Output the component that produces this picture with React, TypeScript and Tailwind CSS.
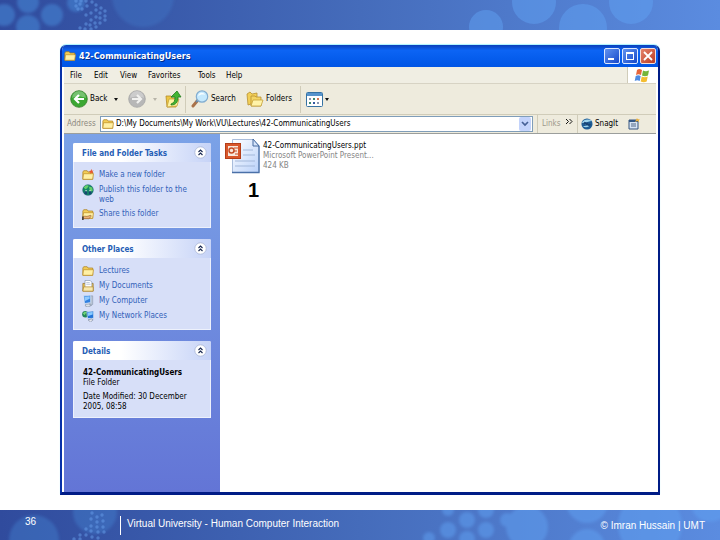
import type { ReactNode } from 'react';

type Kind = 'folder' | 'new' | 'globe' | 'share' | 'docs' | 'computer' | 'network';

const uiFont = "font-['DejaVu_Sans_Condensed','DejaVu_Sans',sans-serif] [font-stretch:condensed]";

const menus = [
    { name: 'File', width: 'w-6' },
    { name: 'Edit', width: 'w-[26px]' },
    { name: 'View', width: 'w-7' },
    { name: 'Favorites', width: 'w-[50px]' },
    { name: 'Tools', width: 'w-7' },
    { name: 'Help', width: 'w-6' },
];

const tasks: { name: string; icon: Kind }[] = [
    { name: 'Make a new folder', icon: 'new' },
    { name: 'Publish this folder to the web', icon: 'globe' },
    { name: 'Share this folder', icon: 'share' },
];

const places: { name: string; icon: Kind }[] = [
    { name: 'Lectures', icon: 'folder' },
    { name: 'My Documents', icon: 'docs' },
    { name: 'My Computer', icon: 'computer' },
    { name: 'My Network Places', icon: 'network' },
];

function FolderShape() {
    return (
        <>
            <path d="M1 3.5 2 2h4l1 1.5h5.5V12H1z" fill="#f3cd58" stroke="#a87b18" strokeWidth=".8" />
            <path d="M1 12 1.8 5.5h11.6L12.4 12z" fill="#fff0a5" stroke="#bd8d25" strokeWidth=".8" />
        </>
    );
}

function SmallIcon({ kind }: { kind: Kind }) {
    return (
        <svg viewBox="0 0 14 14" className="size-3 shrink-0" aria-hidden="true">
            {kind === 'folder' && <FolderShape />}
            {kind === 'new' && (
                <>
                    <FolderShape />
                    <path d="m11 0 .7 2 2-.3-1.5 1.6 1 1.7-2-.5L10 6l-.2-2-2-.8 2-.8z" fill="#e8552d" />
                </>
            )}
            {kind === 'globe' && (
                <>
                    <circle cx="7" cy="7" r="6.2" fill="#168767" stroke="#0c5668" strokeWidth=".6" />
                    <path d="M2 4c2-3 5-3 6-2L6 5 4 6zM8 3l4 1 .5 4-3 1z" fill="#66d06b" />
                    <path d="M3 10c0-3 3-3 3 0v2H3zM8 10c0-3 3-3 3 0v2H8z" fill="#14486f" />
                    <path d="M4 7h1.5v1.5H4zM8.6 7h1.5v1.5H8.6z" fill="#c8ecd5" />
                </>
            )}
            {kind === 'share' && (
                <>
                    <FolderShape />
                    <path d="M1 10.500c3-2 4 0 6-1l3-1 1 1-3 3H1z" fill="#efb178" stroke="#71430f" strokeWidth=".6" />
                    <path d="M0 10h2v4H0z" fill="#4a423b" />
                </>
            )}
            {kind === 'docs' && (
                <>
                    <path d="M1 4h12v9H1z" fill="#f0c650" stroke="#936d23" strokeWidth=".8" />
                    <path d="M3.500.5h6l2 2V9h-8z" fill="#fff" stroke="#7587a2" strokeWidth=".7" />
                    <path d="M5 3h4M5 5h5" stroke="#91a4c3" strokeWidth=".7" />
                    <path d="M1 13 2 8h11v5z" fill="#f8e8af" stroke="#a87b18" strokeWidth=".7" />
                </>
            )}
            {kind === 'computer' && (
                <>
                    <path d="M9 1h3.500v10L9 13z" fill="#b9c5d6" stroke="#71809b" strokeWidth=".5" />
                    <path d="m2 1 8-.7v8.500L3 10z" fill="#2f7fe0" stroke="#e4edf7" strokeWidth=".7" />
                    <path d="m3 2 6-.6v3L3.400 7z" fill="#8fcaff" />
                    <path d="m4 11 4-.5 3 1.500-4 2-3-1z" fill="#dae1e9" stroke="#6d7b92" strokeWidth=".6" />
                </>
            )}
            {kind === 'network' && (
                <>
                    <circle cx="4" cy="5" r="3.800" fill="#218457" />
                    <path d="M1 4c2-3 4-2 4-1L3 6z" fill="#70d575" />
                    <path d="m5.500 2 8-.8v8.500L6.500 10z" fill="#2474d8" stroke="#dde8f3" strokeWidth=".7" />
                    <path d="m6.500 3 6-.7v3L7 7z" fill="#8acbff" />
                    <path d="m7 11.500 4-1 2 1-3 2.500z" fill="#e7e9ef" stroke="#62718a" strokeWidth=".6" />
                </>
            )}
        </svg>
    );
}

function Arrow({ pale = false }: { pale?: boolean }) {
    return (
        <svg viewBox="0 0 4 3" className="h-[3px] w-1 shrink-0" aria-hidden="true">
            <path d="M0 0h4L2 3z" fill={pale ? '#b7b4a8' : '#111'} />
        </svg>
    );
}

function RoundArrow({ forward = false }: { forward?: boolean }) {
    return (
        <svg viewBox="0 0 18 18" className="size-[18px] shrink-0" aria-hidden="true">
            <circle cx="9" cy="9" r="8.300" fill={forward ? '#b7b7b7' : '#3ba732'} stroke={forward ? '#a4a4a4' : '#347d2b'} strokeWidth=".8" />
            <path d="M2 8a7 7 0 0 1 14 0C11 6 7 6 2 8z" fill="#fff" opacity=".3" />
            <path
                d={forward ? 'M4 9h9M9 5l4 4-4 4' : 'M14 9H5M9 5 5 9l4 4'}
                stroke={forward ? '#f1f1ef' : '#fff'}
                strokeWidth="2.200"
                fill="none"
            />
        </svg>
    );
}

function Toolbar() {
    return (
        <div className="flex h-[31px] items-center border-b border-[#d0ccb9] bg-[#eeebdd] px-1.5 text-[8px]">
            <button className="flex w-[42px] items-center gap-0.5">
                <RoundArrow />
                Back
            </button>
            <button aria-label="Back history" className="flex w-4 items-center pl-0.5"><Arrow /></button>
            <button aria-label="Forward" className="flex w-[25px] items-center"><RoundArrow forward /></button>
            <button aria-label="Forward history" className="w-3"><Arrow pale /></button>
            <button aria-label="Up" className="w-5">
                <svg viewBox="0 0 17 18" className="h-[18px] w-[17px]" aria-hidden="true">
                    <path d="M1 6h5l1 2h5l-1 9H2z" fill="#edc742" stroke="#b48c28" strokeWidth=".8" />
                    <path d="m2 17 2-8h10l-2 7z" fill="#fff3a1" stroke="#c6a13a" strokeWidth=".8" />
                    <path d="M6 14c3-1 4-3 4-7H6l6-6 4 6h-3c0 5-2 8-7 8z" fill="#42b432" stroke="#217b1c" strokeWidth=".8" />
                </svg>
            </button>
            <span className="mr-[5px] h-[27px] w-px bg-[#d0ccb9]" />
            <button className="flex w-[55px] items-center gap-0.5">
                <svg viewBox="0 0 18 18" className="size-[18px] shrink-0" aria-hidden="true">
                    <path d="m2 16 5-6" stroke="#aa7249" strokeWidth="3" strokeLinecap="round" />
                    <path d="m5 12 2-2" stroke="#668aad" strokeWidth="2" />
                    <circle cx="11" cy="6.500" r="5.700" fill="#c5e9fd" stroke="#83add0" strokeWidth="1.200" />
                    <path d="M7 6c1-4 6-4 7-1-3-1-5 0-7 1z" fill="#f7fdff" />
                </svg>
                Search
            </button>
            <button className="flex w-[54px] items-center gap-0.5">
                <svg viewBox="0 0 18 18" className="size-[18px] shrink-0" aria-hidden="true">
                    <path d="M1 4 4 2l2 2 5-1v9l-9 3z" fill="#f2cf57" stroke="#b89134" strokeWidth=".8" />
                    <path d="M5 6h4l1 1h5v9H5z" fill="#f4d564" stroke="#b89134" strokeWidth=".8" />
                    <path d="m5 16 2-6h10l-2 6z" fill="#fff3a9" stroke="#c7a23b" strokeWidth=".8" />
                </svg>
                Folders
            </button>
            <span className="mr-[5px] h-[27px] w-px bg-[#d0ccb9]" />
            <button aria-label="Views" className="flex items-center gap-0.5">
                <svg viewBox="0 0 17 15" className="h-[15px] w-[17px]" aria-hidden="true">
                    <rect x=".5" y=".5" width="16" height="14" rx="1" fill="#fff" stroke="#3673a3" />
                    <path d="M1 1h15v3H1z" fill="#5794cc" />
                    <path d="M3 6h2v2H3zM11 10h2v2h-2z" fill="#8796b1" />
                    <path d="M7 6h2v2H7zM3 10h2v2H3z" fill="#3d8a71" />
                    <path d="M11 6h2v2h-2z" fill="#d37850" />
                    <path d="M7 10h2v2H7z" fill="#345aa0" />
                </svg>
                <Arrow />
            </button>
        </div>
    );
}

function AddressBar() {
    return (
        <div className="flex h-[19px] items-center border-b border-[#9b9e9c] bg-[#eeebdd] pl-[3px] text-[8px]">
            <label htmlFor="address" className="w-[33px] text-[#8c897e]">Address</label>
            <div className="flex h-4 min-w-0 flex-1 items-center border border-[#7f9db9] bg-white pr-px pl-px">
                <SmallIcon kind="folder" />
                <input
                    id="address"
                    className="ml-0.5 min-w-0 flex-1 bg-transparent outline-none"
                    defaultValue="D:\My Documents\My Work\VU\Lectures\42-CommunicatingUsers"
                />
                <button aria-label="Address list" className="flex h-3.5 w-3 items-center justify-center rounded-xs bg-[#c3d3fb]">
                    <svg viewBox="0 0 8 6" className="h-1.5 w-2" aria-hidden="true">
                        <path d="m1 1 3 3 3-3" fill="none" stroke="#456096" strokeWidth="1.700" />
                    </svg>
                </button>
            </div>
            <div className="ml-1 flex h-full w-10 items-center justify-between border-l border-[#d0ccb9] pr-1 pl-1">
                <span className="text-[#9d998b]">Links</span>
                <button aria-label="More links" className="pb-1.5">
                    <svg viewBox="0 0 7 5" className="h-[5px] w-[7px]" aria-hidden="true">
                        <path d="m0 0 2.500 2.500L0 5M3.500 0 6 2.500 3.500 5" fill="none" stroke="#111" />
                    </svg>
                </button>
            </div>
            <div className="flex h-full w-[79px] items-center border-l border-[#d0ccb9] pl-[3px]">
                <button className="flex w-[47px] items-center gap-0.5">
                    <svg viewBox="0 0 13 13" className="size-3 shrink-0" aria-hidden="true">
                        <circle cx="6.500" cy="6.500" r="6" fill="#1d5c94" />
                        <path d="M1 5C3 1 8 1 12 3L8 4 5 5l5 2c-1 3-5 4-8 2l5-1z" fill="#9fd5ee" />
                        <path d="m4 4 7 3-2 2-7-3z" fill="#174476" />
                    </svg>
                    SnagIt
                </button>
                <button aria-label="Capture">
                    <svg viewBox="0 0 12 12" className="size-3" aria-hidden="true">
                        <path d="M1 2h9v9H1z" fill="#d7e4f4" stroke="#36557f" />
                        <path d="M1 2h9v2H1z" fill="#325684" />
                        <path d="M3 6h5M3 8h5" stroke="#526887" />
                        <path d="m9 0 .7 1.300H12l-1.400 1.200.7 1.800L9.300 3 7 4l1-2z" fill="#f0b33c" />
                    </svg>
                </button>
            </div>
        </div>
    );
}

function Panel({ title, children }: { title: string; children: ReactNode }) {
    return (
        <section className="rounded-t-xs border border-t-0 border-[#edf1fc] bg-[#d7dff8]">
            <div className="-mx-px flex h-[19px] items-center justify-between rounded-t-xs bg-linear-to-r from-white from-35% to-[#c6d3f7] pr-1 pl-[9px] text-[#255db5]">
                <h2 className="pt-0.5 text-[8px] font-bold">{title}</h2>
                <button aria-label={`Collapse ${title}`}>
                    <svg viewBox="0 0 13 13" className="size-[13px]" aria-hidden="true">
                        <circle cx="6.500" cy="6.500" r="5.700" fill="#fff" stroke="#a8b5d6" strokeWidth=".8" />
                        <path d="m4.500 6 2-2 2 2m-4 3 2-2 2 2" fill="none" stroke="#17264f" strokeWidth="1.100" />
                    </svg>
                </button>
            </div>
            {children}
        </section>
    );
}

function LinkList({ items }: { items: typeof tasks }) {
    return (
        <ul className="space-y-[3px] py-[7px] pr-5 pl-2">
            {items.map((item) => (
                <li key={item.name}>
                    <a href="#" className="flex items-start gap-[5px] text-[8px] leading-[10px] text-[#3262b8]">
                        <SmallIcon kind={item.icon} />
                        <span className="pt-px">{item.name}</span>
                    </a>
                </li>
            ))}
        </ul>
    );
}

function Sidebar() {
    return (
        <aside className="w-[156px] shrink-0 space-y-[11px] bg-linear-to-b from-[#7ba2e7] to-[#6375d6] px-[9px] pt-[9px]">
            <Panel title="File and Folder Tasks"><LinkList items={tasks} /></Panel>
            <Panel title="Other Places"><LinkList items={places} /></Panel>
            <Panel title="Details">
                <div className="pt-2 pr-5 pb-[5px] pl-[9px] text-[8px] leading-[10px]">
                    <p className="font-bold">42-CommunicatingUsers</p>
                    <p>File Folder</p>
                    <p className="mt-1">Date Modified: 30 December 2005, 08:58</p>
                </div>
            </Panel>
        </aside>
    );
}

function Explorer() {
    return (
        <div className={`${uiFont} flex flex-1 flex-col overflow-hidden rounded-t-md border-x-2 border-b-3 border-[#0831a8] border-r-[#001c86] border-b-[#001c86] bg-white text-black shadow-[0_-1px_1px_#aaf3ff]`}>
            <div className="flex h-[22px] items-center gap-[3px] bg-linear-to-b from-[#0b3fba] via-[#0c64f4] via-25% to-[#0055e5] px-0.5 text-white">
                <SmallIcon kind="folder" />
                <h1 className="flex-1 pt-0.5 text-[9px] font-bold [text-shadow:1px_1px_#002a86]">42-CommunicatingUsers</h1>
                <div className="flex gap-0.5">
                    <button aria-label="Minimize" className="flex size-4 items-end rounded-xs border border-[#dce8ff] bg-linear-to-br from-[#6292ef] to-[#1746ca] p-[3px]">
                        <span className="h-0.5 w-1.5 bg-white" />
                    </button>
                    <button aria-label="Maximize" className="size-4 rounded-xs border border-[#dce8ff] bg-linear-to-br from-[#6292ef] to-[#1746ca] p-[3px]">
                        <span className="block size-2 border border-t-2 border-white" />
                    </button>
                    <button aria-label="Close" className="flex size-4 items-center justify-center rounded-xs border border-[#f5ded8] bg-linear-to-br from-[#e5836b] to-[#b93a22]">
                        <svg viewBox="0 0 10 10" className="size-2.5" aria-hidden="true">
                            <path d="m1 1 8 8m0-8L1 9" stroke="#fff" strokeWidth="1.800" />
                        </svg>
                    </button>
                </div>
            </div>
            <div className="mx-0.5 flex flex-1 flex-col">
                <nav className="flex h-[17px] items-stretch border-b border-[#d7d3c4] bg-[#f0eee3] pl-1.5 text-[8px]">
                    {menus.map((menu) => (
                        <button key={menu.name} className={`${menu.width} pt-0.5 text-left`}>{menu.name}</button>
                    ))}
                    <div className="ml-auto flex w-[29px] items-center justify-center border-l border-[#d0ccb9] bg-white">
                        <svg viewBox="0 0 16 15" className="h-[15px] w-4" aria-hidden="true">
                            <path d="M3 2c2-1.500 3-1 5 0L7 7C5 6 4 6 2 7z" fill="#e6663b" />
                            <path d="M9 2.500c2 1 3 1 6 0L14 7.500c-2 1-4 1-6 0z" fill="#76b53b" />
                            <path d="M1.700 8c2-1 3-1 5 0l-1 5c-2-1-3-1-5 0z" fill="#4e8be2" />
                            <path d="M7.700 8.500c2 1 4 1 6 0l-1 5c-2 1-4 1-6 0z" fill="#f4bd31" />
                        </svg>
                    </div>
                </nav>
                <Toolbar />
                <AddressBar />
                <div className="flex flex-1">
                    <Sidebar />
                    <main className="flex-1 px-1 pt-1">
                        <div className="flex items-start gap-[3px]">
                            <svg viewBox="0 0 36 36" className="size-9 shrink-0" aria-hidden="true">
                                <defs>
                                    <linearGradient id="paper" x1="0" y1="0" x2="1" y2="1">
                                        <stop stopColor="#fff" />
                                        <stop offset="1" stopColor="#b9d1fa" />
                                    </linearGradient>
                                </defs>
                                <path d="M8.500 1.500H29l6 6v27H8.500z" fill="url(#paper)" stroke="#a9bddb" />
                                <path d="M8 34.500h27V8" fill="none" stroke="#4a70a8" strokeWidth="1.300" />
                                <path d="M29 1v7h6z" fill="#d6e5fb" stroke="#466b9f" />
                                <path d="M19 12h10M19 17h12M11 23h20M11 28h20" stroke="#a3b8da" />
                                <rect x="1.500" y="5.500" width="15" height="15" fill="#d9572b" stroke="#b43e18" />
                                <path d="M4 8h10v10H4z" fill="#f9e8dc" />
                                <circle cx="7.500" cy="12.500" r="2.500" fill="none" stroke="#c44d26" strokeWidth="1.500" />
                                <path d="M10 10h4M10 13h3M11 16h3" stroke="#c44d26" />
                            </svg>
                            <div className="pt-[3px] text-[8px] leading-[10px]">
                                <p>42-CommunicatingUsers.ppt</p>
                                <p className="text-[#858585]">Microsoft PowerPoint Present...</p>
                                <p className="text-[#858585]">424 KB</p>
                            </div>
                        </div>
                        <p className="ml-6 pt-1 font-['Liberation_Sans',sans-serif] text-xl leading-6 font-bold">1</p>
                    </main>
                </div>
            </div>
        </div>
    );
}

// little dots scattered over the banner and the footer
function Dots({ points }: { points: number[][] }) {
    return (
        <g fill="#679eea" opacity=".5">
            {points.map(([x, y]) => <circle key={`${x}-${y}`} cx={x} cy={y} r="1.700" />)}
        </g>
    );
}

const topDots = [
    [76, 1], [81, 1], [86, 1], [76, 6], [80, 4], [82, 9], [78, 9], [87, 6], [92, 2], [96, 5], [86, 15], [91, 13],
    [96, 10], [101, 8], [100, 13], [105, 11], [105, 16], [100, 18], [96, 17], [91, 20], [86, 24], [90, 25], [95, 23],
    [100, 23], [105, 20], [80, 28], [85, 29], [91, 29], [96, 27],
];
const bottomDots = [
    [92, 3], [97, 7], [102, 5], [91, 9], [97, 12], [103, 11], [91, 16], [97, 17], [103, 17], [86, 19], [91, 21],
    [98, 22], [104, 22], [80, 25], [86, 25], [92, 27], [98, 28], [74, 29], [80, 29],
];

export default function App() {
    return (
        <div className="flex min-h-screen flex-col bg-white font-['Liberation_Sans',sans-serif]">
            <header className="h-[30px] bg-linear-to-r from-[#304b9d] via-[#456cbb] to-[#5b8ce0]">
                <svg viewBox="0 0 720 30" preserveAspectRatio="none" className="size-full" aria-hidden="true">
                    <defs>
                        <filter id="soft"><feGaussianBlur stdDeviation="1.500" /></filter>
                        <filter id="edge"><feGaussianBlur stdDeviation=".7" /></filter>
                    </defs>
                    <g fill="#427ccb" opacity=".7" filter="url(#soft)">
                        <circle cx="4" cy="15" r="11" />
                        <circle cx="28" cy="2" r="11" />
                        <circle cx="28" cy="27" r="12" />
                        <circle cx="52" cy="15" r="11" />
                        <circle cx="76" cy="3" r="9" />
                        <circle cx="143" cy="-4" r="31" opacity=".5" />
                    </g>
                    <g fill="#60a1f2" opacity=".5" filter="url(#edge)">
                        <circle cx="486" cy="27" r="17" />
                        <circle cx="534" cy="2" r="22" />
                        <circle cx="583" cy="28" r="24" />
                        <circle cx="631" cy="2" r="22" />
                    </g>
                    <Dots points={topDots} />
                </svg>
            </header>
            <div className="flex flex-1 flex-col px-[60px] py-[15px]">
                <Explorer />
            </div>
            <footer className="grid h-[30px] bg-linear-to-r from-[#304b9d] via-[#456cbb] to-[#5b8ce0] text-[10px] text-white *:col-start-1 *:row-start-1">
                <svg viewBox="0 0 720 30" preserveAspectRatio="none" className="h-[30px] w-full" aria-hidden="true">
                    <g fill="#4485d3" opacity=".4" filter="url(#soft)">
                        <circle cx="34" cy="30" r="25" />
                        <circle cx="95" cy="2" r="22" />
                    </g>
                    <g fill="#60a1f2" opacity=".5" filter="url(#soft)">
                        <circle cx="448" cy="0" r="6" />
                        <circle cx="467" cy="10" r="8" />
                        <circle cx="448" cy="20" r="8" />
                        <circle cx="486" cy="20" r="8" />
                        <circle cx="486" cy="0" r="8" />
                        <circle cx="467" cy="29" r="8" />
                        <circle cx="429" cy="28" r="6" />
                        <circle cx="507" cy="10" r="7" />
                        <circle cx="527" cy="17" r="21" />
                        <circle cx="587" cy="-8" r="21" />
                        <circle cx="587" cy="37" r="18" />
                        <circle cx="650" cy="15" r="32" />
                        <circle cx="710" cy="-7" r="19" />
                    </g>
                    <Dots points={bottomDots} />
                </svg>
                <div className="flex items-center">
                    <span className="w-[120px] pb-[7px] pl-[25px]">36</span>
                    <span className="mr-1.5 h-[19px] w-px bg-white" />
                    <span className="flex-1 pb-1">Virtual University - Human Computer Interaction</span>
                    <span className="pr-[15px]">© Imran Hussain | UMT</span>
                </div>
            </footer>
        </div>
    );
}
